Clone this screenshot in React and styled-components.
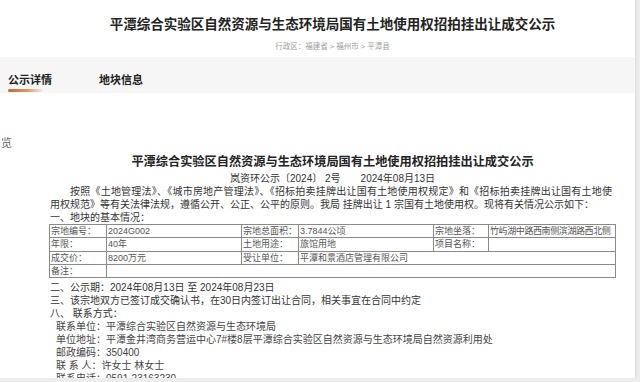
import styled, { createGlobalStyle } from 'styled-components';

const FONT = `"Liberation Sans", "Noto Sans CJK SC", sans-serif`;

const GlobalStyle = createGlobalStyle`
    html, body {
        margin: 0;
        padding: 0;
        background: #ededed;
        font-family: ${FONT};
    }
`;

const tableRows = [
    [
        { label: '宗地编号：', value: '2024G002' },
        { label: '宗地总面积：', value: '3.7844公顷' },
        { label: '宗地坐落：', value: '竹屿湖中路西南侧滨湖路西北侧', tight: true },
    ],
    [
        { label: '年限：', value: '40年' },
        { label: '土地用途：', value: '旅馆用地' },
        { label: '项目名称：', value: '' },
    ],
    [
        { label: '成交价：', value: '8200万元' },
        { label: '受让单位：', value: '平潭和景酒店管理有限公司' },
    ],
];

const contacts = [
    '联系单位：平潭综合实验区自然资源与生态环境局',
    '单位地址：平潭金井湾商务营运中心7#楼8层平潭综合实验区自然资源与生态环境局自然资源利用处',
    '邮政编码：350400',
    '联 系 人：许女士 林女士',
    '联系电话：0591-23163230',
];

function App() {
    return (
        <>
            <GlobalStyle />
            <Page>
                <Header>
                    <MainTitle>平潭综合实验区自然资源与生态环境局国有土地使用权招拍挂出让成交公示</MainTitle>
                    <Breadcrumb>行政区：福建省 &gt; 福州市 &gt; 平潭县</Breadcrumb>
                </Header>
                <TabBar>
                    <Tab active>公示详情</Tab>
                    <Tab>地块信息</Tab>
                </TabBar>
                <Content>
                    <Preview>览</Preview>
                    <Doc>
                        <DocTitle>平潭综合实验区自然资源与生态环境局国有土地使用权招拍挂出让成交公示</DocTitle>
                        <DocNo>岚资环公示〔2024〕 2号　　2024年08月13日</DocNo>
                        <Line indent justify>
                            按照《土地管理法》、《城市房地产管理法》、《招标拍卖挂牌出让国有土地使用权规定》和《招标拍卖挂牌出让国有土地使
                        </Line>
                        <Line>
                            用权规范》等有关法律法规，遵循公开、公正、公平的原则。我局 挂牌出让 1 宗国有土地使用权。现将有关情况公示如下：
                        </Line>
                        <Line>一、地块的基本情况：</Line>
                        <Table>
                            <colgroup>
                                <col style={{ width: 57 }} />
                                <col style={{ width: 135 }} />
                                <col style={{ width: 57 }} />
                                <col style={{ width: 135 }} />
                                <col style={{ width: 55 }} />
                                <col style={{ width: 127 }} />
                            </colgroup>
                            <tbody>
                                {tableRows.map((row, i) => (
                                    <tr key={i}>
                                        {row.map((cell, j) => (
                                            <Cells key={j} cell={cell} span={row.length === 2 && j === 1 ? 3 : 1} />
                                        ))}
                                    </tr>
                                ))}
                                <tr>
                                    <Td>备注：</Td>
                                    <Td colSpan={5}></Td>
                                </tr>
                            </tbody>
                        </Table>
                        <Line>二、公示期：2024年08月13日 至 2024年08月23日</Line>
                        <Line>三、该宗地双方已签订成交确认书，在30日内签订出让合同，相关事宜在合同中约定</Line>
                        <Line>八、 联系方式：</Line>
                        {contacts.map((c) => (
                            <Contact key={c}>{c}</Contact>
                        ))}
                    </Doc>
                </Content>
            </Page>
        </>
    );
}

function Cells({ cell, span }) {
    return (
        <>
            <Td>{cell.label}</Td>
            <Td colSpan={span} tight={cell.tight}>{cell.value}</Td>
        </>
    );
}

export default App;

const Page = styled.div`
    width: 635px;
    height: 378px;
    background: #fff;
    box-shadow: 1px 0 3px rgba(0, 0, 0, 0.08);
    display: flex;
    flex-direction: column;
    overflow: hidden;
`;

const Header = styled.header`
    height: 57px;
    flex-shrink: 0;
    display: flex;
    flex-direction: column;
    align-items: center;
    padding: 16px 0 0 30px;
    box-sizing: border-box;
`;

const MainTitle = styled.h1`
    margin: 0;
    font-size: 13.5px;
    line-height: 18px;
    font-weight: bold;
    color: #222;
    white-space: nowrap;
`;

const Breadcrumb = styled.div`
    margin-top: 8px;
    font-size: 7.5px;
    line-height: 10px;
    color: #a0a0a0;
    white-space: nowrap;
`;

const TabBar = styled.nav`
    height: 36px;
    flex-shrink: 0;
    background: #f6f6f6;
    display: flex;
    align-items: flex-start;
    gap: 47px;
    padding: 16px 0 0 8px;
    box-sizing: border-box;
`;

const Tab = styled.div`
    position: relative;
    font-size: 11px;
    line-height: 14px;
    font-weight: bold;
    color: #222;
    &::after {
        content: '';
        display: ${(p) => (p.active ? 'block' : 'none')};
        position: absolute;
        left: 0;
        top: 16px;
        width: 36px;
        height: 3px;
        border-radius: 2px;
        background: linear-gradient(90deg, #c86a2a 0%, #dd9a66 55%, rgba(240, 200, 170, 0) 100%);
    }
`;

const Content = styled.main`
    flex: 1;
    min-height: 0;
    padding-top: 43px;
    font-size: 10px;
    color: #333;
`;

const Preview = styled.div`
    margin-left: 1px;
    height: 14px;
    font-size: 11px;
    line-height: 14px;
    color: #666;
`;

const Doc = styled.div`
    width: 565px;
    margin: 0 0 0 50px;
`;

const DocTitle = styled.h2`
    margin: 4px 0 0 -50px;
    width: 665px;
    height: 17px;
    text-align: center;
    font-size: 12.2px;
    line-height: 17px;
    font-weight: bold;
    color: #222;
    white-space: nowrap;
`;

const DocNo = styled.div`
    margin: 1px 0 0 180px;
    height: 13px;
    font-size: 10px;
    line-height: 13px;
    color: #333;
    white-space: pre;
`;

const Line = styled.div`
    height: 13px;
    font-size: 10px;
    line-height: 13px;
    color: #333;
    white-space: nowrap;
    padding-left: ${(p) => (p.indent ? '20px' : '0')};
    width: ${(p) => (p.justify ? '542px' : 'auto')};
    text-align-last: ${(p) => (p.justify ? 'justify' : 'auto')};
    text-align: ${(p) => (p.justify ? 'justify' : 'left')};
`;

const Table = styled.table`
    width: 566px;
    margin: 0 0 3px -1px;
    border-collapse: collapse;
    table-layout: fixed;
`;

const Td = styled.td`
    border: 1px solid #8a8a8a;
    height: 12.3px;
    padding: 0 1px;
    font-size: 9px;
    line-height: 12px;
    color: #555;
    white-space: nowrap;
    overflow: hidden;
    letter-spacing: ${(p) => (p.tight ? '-0.4px' : '0')};
`;

const Contact = styled.div`
    height: 13px;
    padding-left: 6px;
    font-size: 10px;
    line-height: 13px;
    color: #444;
    white-space: nowrap;
`;
